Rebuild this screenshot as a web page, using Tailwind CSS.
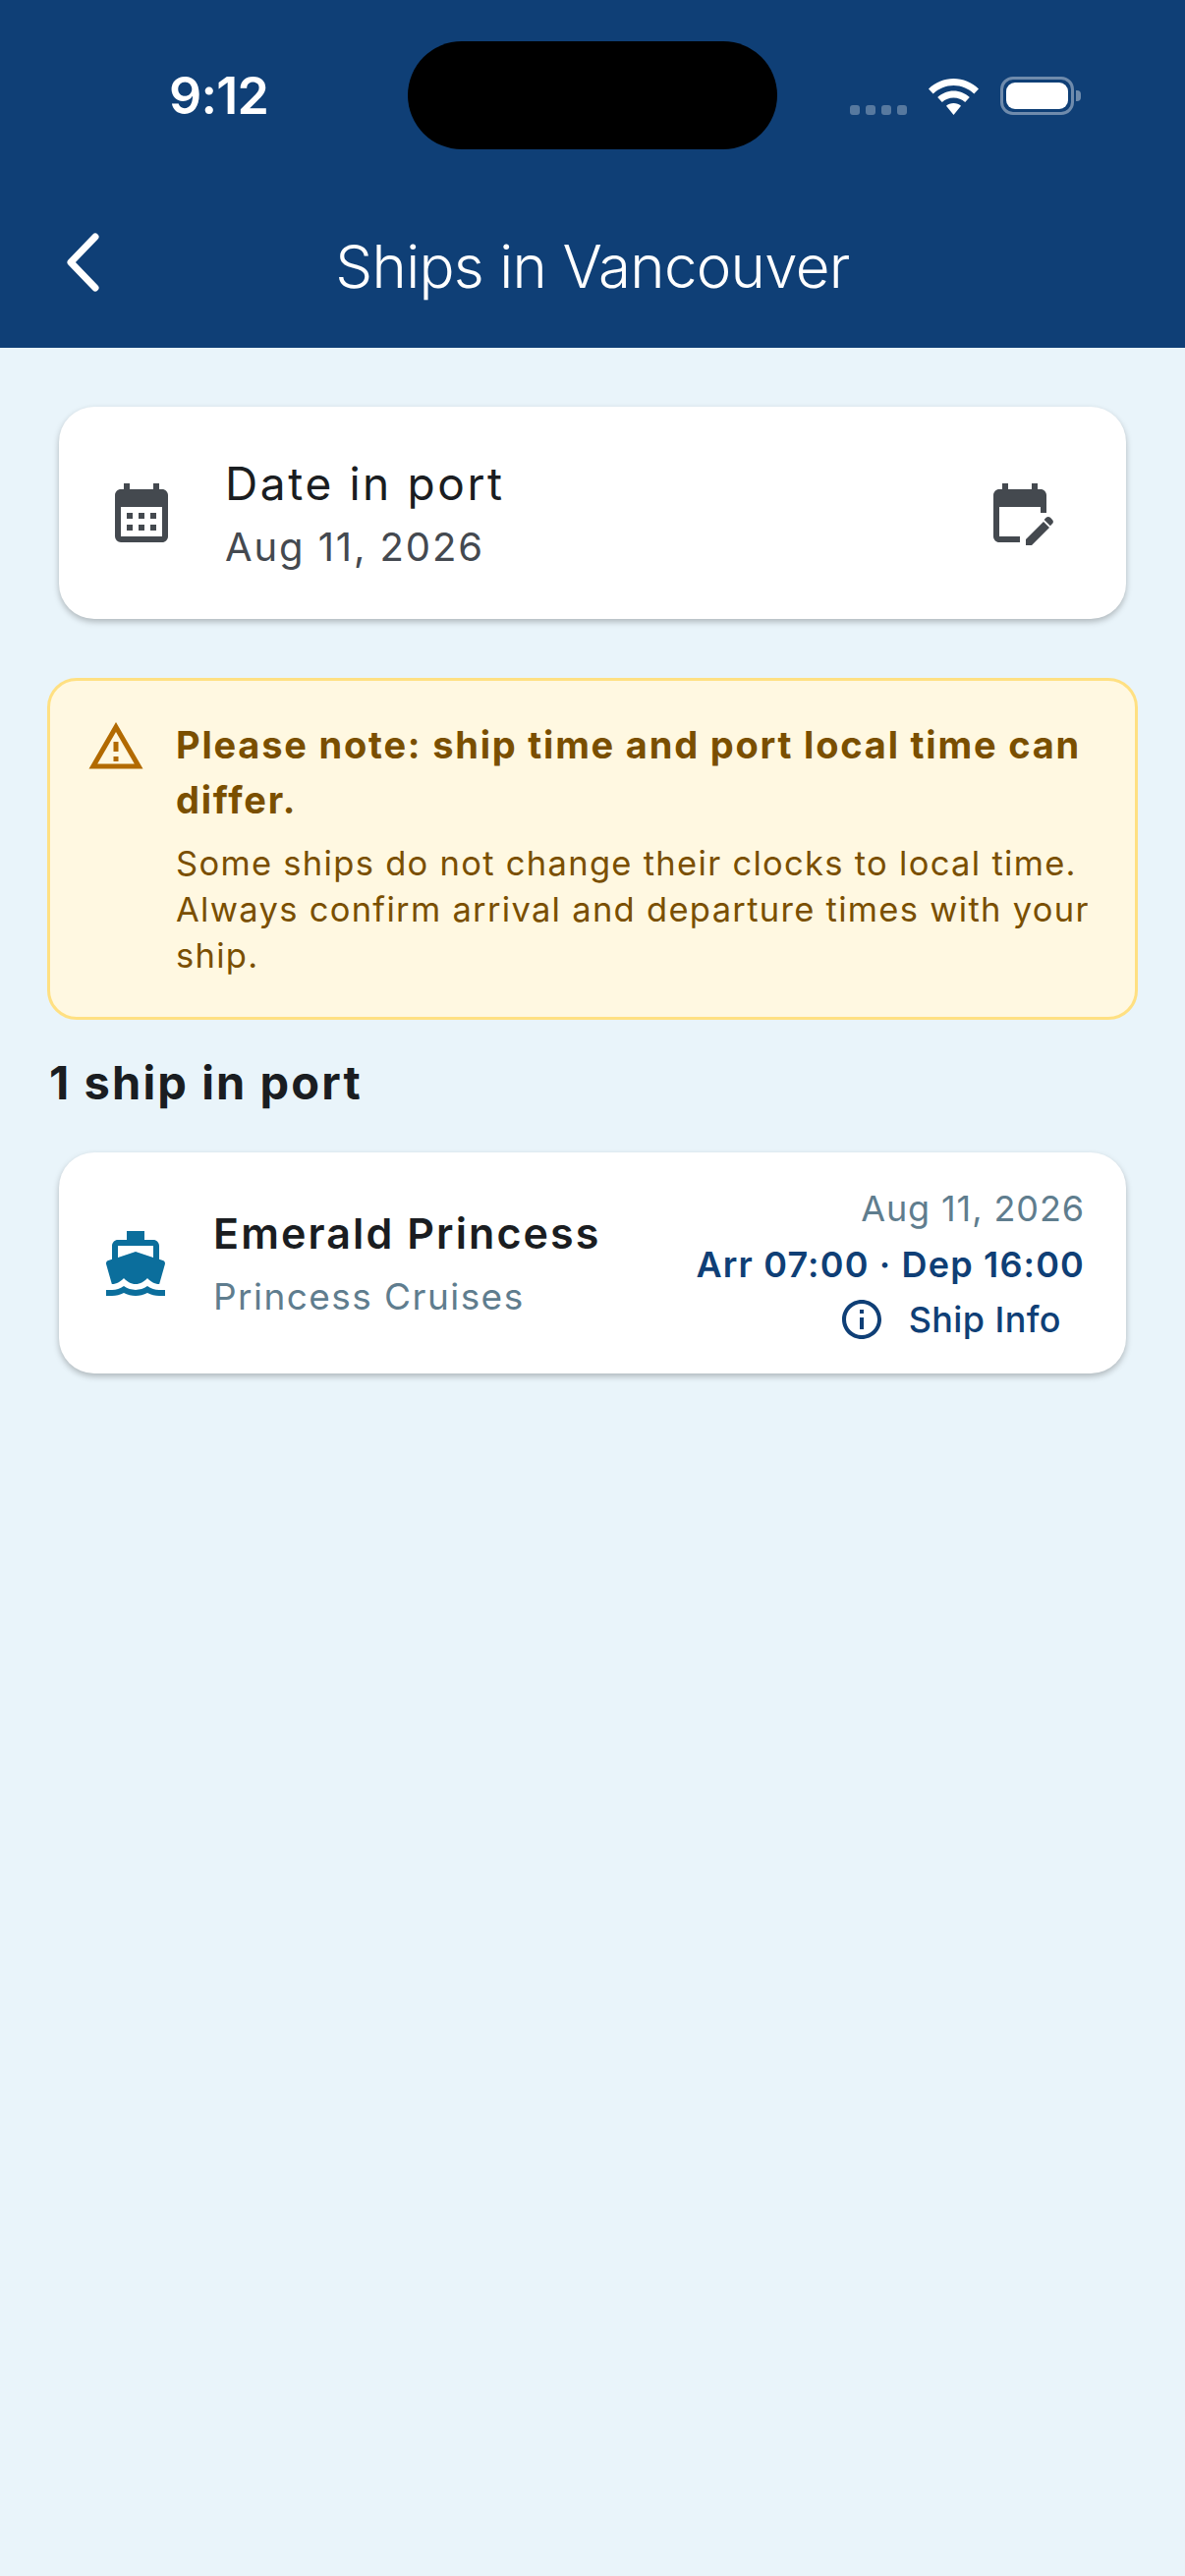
<!DOCTYPE html>
<html lang="en">
<head>
<meta charset="utf-8">
<script src="https://cdn.jsdelivr.net/npm/@tailwindcss/browser@4"></script>
<title>Ships in Vancouver</title>
</head>
<body class="m-0 font-['Inter',sans-serif]">
<div class="w-[1206px] h-[2622px] bg-[#e9f4fa] flex flex-col overflow-hidden">
  <header class="relative h-[354px] bg-[#0f3f76] shrink-0 text-white">
    <div class="absolute left-[415px] top-[42px] w-[376px] h-[110px] rounded-[55px] bg-black"></div>
    <div class="flex items-start h-[214px] pt-[68px] pl-[172px]">
      <span class="text-[52px] leading-[60px] font-semibold tracking-[-0.8px]">9:12</span>
      <div class="ml-auto mr-[106px] flex items-end h-[50px] pt-[10px] pb-[1px]">
        <div class="flex gap-[6px] mr-[22px]">
          <i class="block w-[10px] h-[10px] rounded-[3px] bg-white/30"></i>
          <i class="block w-[10px] h-[10px] rounded-[3px] bg-white/30"></i>
          <i class="block w-[10px] h-[10px] rounded-[3px] bg-white/30"></i>
          <i class="block w-[10px] h-[10px] rounded-[3px] bg-white/30"></i>
        </div>
        <svg class="block w-[51px] h-[37px] mr-[22px]" viewBox="0 0 51 37" fill="#fff"><path d="M25.5 0C35 0 44 3.700 51 10.500L46.300 15.500C40.500 10 33.300 7 25.500 7S10.500 10 4.700 15.500L0 10.500C7 3.700 16 0 25.500 0Z"/><path d="M25.500 12.500C31.700 12.500 37.300 14.900 41.800 19L37.200 24C34 21.200 29.900 19.500 25.500 19.500S17 21.200 13.800 24L9.200 19C13.700 14.900 19.300 12.500 25.500 12.500Z"/><path d="M25.500 25C28.400 25 31 26 33 27.800L25.500 37 18 27.800C20 26 22.600 25 25.500 25Z"/></svg>
        <div class="flex items-center">
          <div class="w-[75px] h-[39px] rounded-[13px] border-[3px] border-white/40 p-[3px]">
            <div class="w-full h-full rounded-[9px] bg-white"></div>
          </div>
          <div class="w-[5px] h-[11px] ml-[2px] rounded-r-[4px] bg-white/40"></div>
        </div>
      </div>
    </div>
    <div class="relative h-[140px] flex items-center justify-center">
      <svg class="absolute left-[62px] top-[22px] w-[44px] h-[62px]" viewBox="0 0 44 62" fill="none" stroke="#fff" stroke-width="7" stroke-linecap="round" stroke-linejoin="round"><path d="M35 5 L10 31 L35 57" /></svg>
      <h1 class="text-[60px] leading-[72px] font-[350] tracking-[-0.7px] -mt-[26px]">Ships in Vancouver</h1>
    </div>
  </header>
  <main class="flex flex-col">
    <section class="mt-[60px] mx-[60px] h-[216px] rounded-[36px] bg-white shadow-[0_3px_6px_rgba(0,0,0,0.25)] flex items-center pl-[48px] pr-[72px]">
      <svg class="w-[72px] h-[72px] shrink-0" viewBox="0 0 24 24" fill="#44494f"><path d="M19 4h-1V2h-2v2H8V2H6v2H5c-1.110 0-1.990.9-1.990 2L3 20a2 2 0 0 0 2 2h14c1.100 0 2-.9 2-2V6c0-1.100-.9-2-2-2zm0 16H5V10h14v10zM9 14H7v-2h2v2zm4 0h-2v-2h2v2zm4 0h-2v-2h2v2zm-8 4H7v-2h2v2zm4 0h-2v-2h2v2zm4 0h-2v-2h2v2z"/></svg>
      <div class="ml-[49px] flex-1 pt-[2px]">
        <div class="text-[46px] leading-[64px] tracking-[2.6px] text-[#1a1d21]">Date in port</div>
        <div class="mt-[3px] text-[40px] leading-[60px] tracking-[1.9px] text-[#444950]">Aug 11, 2026</div>
      </div>
      <svg class="w-[72px] h-[72px] shrink-0" viewBox="0 0 24 24" fill="#44494f"><path d="M5 10h14v2h2V6c0-1.100-.9-2-2-2h-1V2h-2v2H8V2H6v2H5c-1.100 0-1.990.9-1.990 2L3 20c0 1.100.89 2 2 2h7v-2H5V10z"/><path d="M23 15.700l-.7.7-2.100-2.100.7-.7c.4-.4 1-.4 1.400 0l.7.7c.4.4.4 1 0 1.400z"/><path d="M20 15L14 21V23H16L22 17Z"/></svg>
    </section>
    <section class="mt-[60px] mx-[48px] h-[348px] rounded-[30px] border-[3px] border-[#ffe082] bg-[#fff8e1] flex pt-[37px] pl-[37px] pr-[20px]">
      <svg class="w-[60px] h-[60px] shrink-0" viewBox="0 0 24 24" fill="#b26a00"><path d="M12 5.990 19.530 19H4.470L12 5.990M12 2 1 21h22L12 2zm1 14h-2v2h2v-2zm0-6h-2v4h2v-4z"/></svg>
      <div class="ml-[31px] text-[#7a4f00]">
        <div class="text-[38px] leading-[56px] font-bold tracking-[1.8px]">Please note: ship time and port local time can differ.</div>
        <div class="mt-[13px] text-[34.5px] leading-[47px] tracking-[1.3px]">Some ships do not change their clocks to local time.<br>Always confirm arrival and departure times with your<br>ship.</div>
      </div>
    </section>
    <h2 class="mt-[34px] ml-[50px] text-[47px] leading-[60px] font-[650] tracking-[2.1px] text-[#1a1d21]">1 ship in port</h2>
    <section class="mt-[41px] mx-[60px] h-[225px] rounded-[36px] bg-white shadow-[0_3px_6px_rgba(0,0,0,0.25)] flex items-center pl-[42px] pr-[42px]">
      <svg class="w-[72px] h-[72px] shrink-0" viewBox="0 0 24 24" fill="#0b6e9c"><path d="M20 21c-1.390 0-2.780-.47-4-1.320-2.440 1.710-5.560 1.710-8 0C6.780 20.530 5.390 21 4 21H2v2h2c1.380 0 2.740-.35 4-.99 2.520 1.290 5.480 1.290 8 0 1.260.65 2.620.99 4 .99h2v-2h-2zM3.950 19H4c1.600 0 3.020-.88 4-2 .98 1.120 2.400 2 4 2s3.020-.88 4-2c.98 1.120 2.400 2 4 2h.05l1.890-6.680c.08-.26.06-.54-.06-.78s-.34-.42-.6-.5L20 10.620V6c0-1.100-.9-2-2-2h-3V1H9v3H6c-1.100 0-2 .9-2 2v4.620l-1.290.42c-.26.08-.48.26-.6.5s-.15.52-.06.78L3.950 19zM6 6h12v3.970L12 8 6 9.970V6z"/></svg>
      <div class="ml-[43px] flex-1">
        <div class="text-[43px] leading-[62px] font-semibold tracking-[2.1px] text-[#1a1d21]">Emerald Princess</div>
        <div class="mt-[6px] text-[37px] leading-[56px] tracking-[1.44px] text-[#5f7d8e]">Princess Cruises</div>
      </div>
      <div class="flex flex-col items-end mt-[1px]">
        <div class="text-[36px] leading-[56px] tracking-[0.9px] text-[#5f7d8e]">Aug 11, 2026</div>
        <div class="text-[36px] leading-[56px] mt-[1px] font-semibold tracking-[1.15px] text-[#0f3f76]">Arr 07:00 · Dep 16:00</div>
        <div class="flex items-center h-[56px] pr-[24px]">
          <svg class="w-[48px] h-[48px]" viewBox="0 0 24 24" fill="#0f3f76"><path d="M11 7h2v2h-2zm0 4h2v6h-2zm1-9C6.480 2 2 6.480 2 12s4.480 10 10 10 10-4.480 10-10S17.520 2 12 2zm0 18c-4.410 0-8-3.590-8-8s3.590-8 8-8 8 3.590 8 8-3.590 8-8 8z"/></svg>
          <span class="ml-[24px] text-[36px] leading-[56px] font-medium tracking-[0.4px] text-[#0f3f76]">Ship Info</span>
        </div>
      </div>
    </section>
  </main>
</div>
</body>
</html>
